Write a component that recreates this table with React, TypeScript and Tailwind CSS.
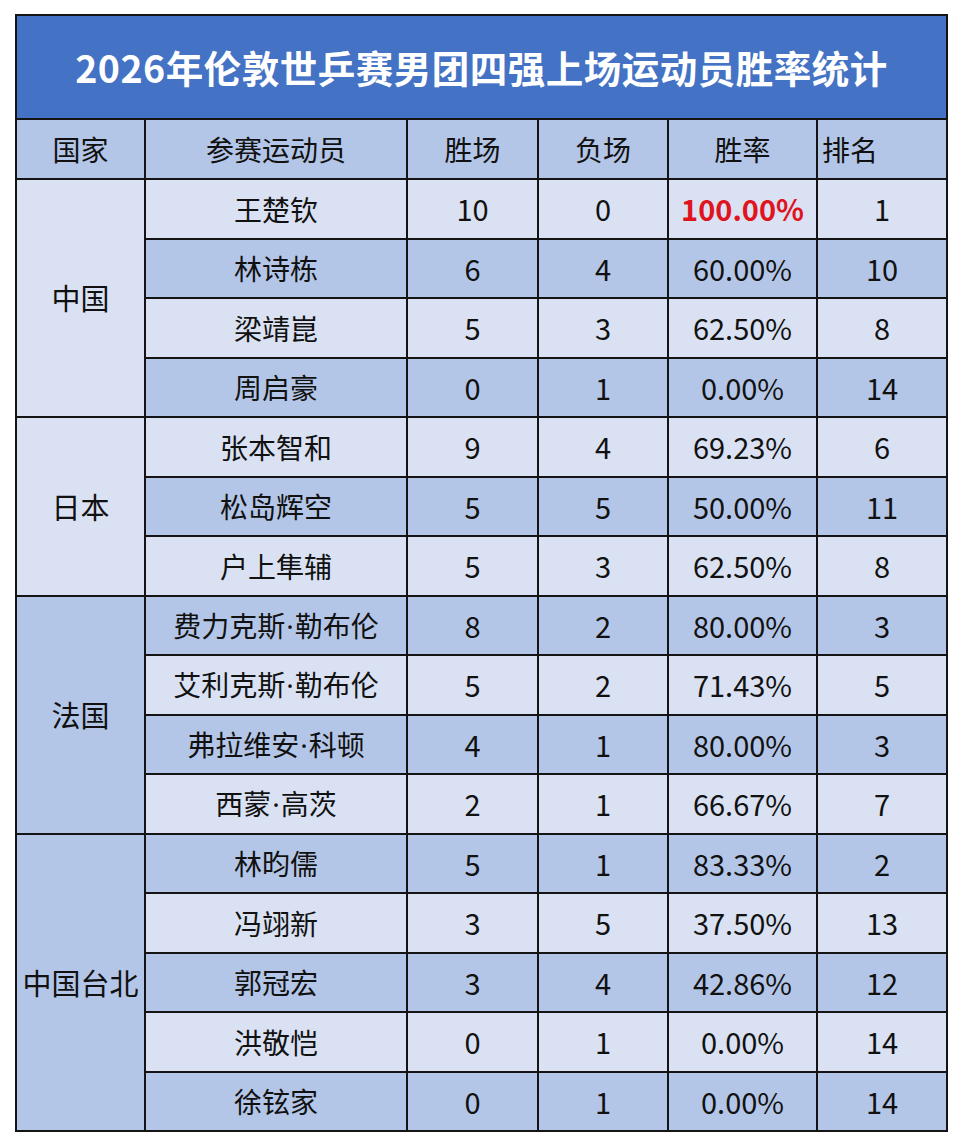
const groups = [
  {
    country: '中国',
    tone: 'light',
    players: [
      { name: '王楚钦', win: 10, loss: 0, rate: '100.00%', rank: 1, top: true },
      { name: '林诗栋', win: 6, loss: 4, rate: '60.00%', rank: 10 },
      { name: '梁靖崑', win: 5, loss: 3, rate: '62.50%', rank: 8 },
      { name: '周启豪', win: 0, loss: 1, rate: '0.00%', rank: 14 },
    ],
  },
  {
    country: '日本',
    tone: 'light',
    players: [
      { name: '张本智和', win: 9, loss: 4, rate: '69.23%', rank: 6 },
      { name: '松岛辉空', win: 5, loss: 5, rate: '50.00%', rank: 11 },
      { name: '户上隼辅', win: 5, loss: 3, rate: '62.50%', rank: 8 },
    ],
  },
  {
    country: '法国',
    tone: 'dark',
    players: [
      { name: '费力克斯·勒布伦', win: 8, loss: 2, rate: '80.00%', rank: 3 },
      { name: '艾利克斯·勒布伦', win: 5, loss: 2, rate: '71.43%', rank: 5 },
      { name: '弗拉维安·科顿', win: 4, loss: 1, rate: '80.00%', rank: 3 },
      { name: '西蒙·高茨', win: 2, loss: 1, rate: '66.67%', rank: 7 },
    ],
  },
  {
    country: '中国台北',
    tone: 'dark',
    players: [
      { name: '林昀儒', win: 5, loss: 1, rate: '83.33%', rank: 2 },
      { name: '冯翊新', win: 3, loss: 5, rate: '37.50%', rank: 13 },
      { name: '郭冠宏', win: 3, loss: 4, rate: '42.86%', rank: 12 },
      { name: '洪敬恺', win: 0, loss: 1, rate: '0.00%', rank: 14 },
      { name: '徐铉家', win: 0, loss: 1, rate: '0.00%', rank: 14 },
    ],
  },
];

const cell = 'border-2 border-[#141414] text-center align-middle p-0';
const num = 'text-[29px]';

// the names use a narrow latin middle dot, not the full-width CJK one
function Name({ name }: { name: string }) {
  const parts = name.split('·');
  return (
    <>
      {parts.map((part, i) => (
        <span key={i}>
          {i > 0 && <span className="font-['Noto_Sans',sans-serif] mx-[1px]">·</span>}
          {part}
        </span>
      ))}
    </>
  );
}

export default function App() {
  let rowIndex = 0;
  return (
    <div
      className="w-[960px] h-[1144px] bg-white pl-[15px] pt-[14px]"
      style={{ fontFamily: '"Microsoft YaHei", "Noto Sans CJK SC", "Noto Sans", sans-serif' }}
    >
      <table className="border-collapse border-2 border-[#141414] w-[931px] table-fixed text-[#111] text-[28px]">
        <colgroup>
          <col className="w-[129px]" />
          <col className="w-[262px]" />
          <col className="w-[131px]" />
          <col className="w-[130px]" />
          <col className="w-[149px]" />
          <col className="w-[130px]" />
        </colgroup>
        <thead>
          <tr className="h-[104px]">
            <th colSpan={6} className={`${cell} bg-[#4472c4] text-white text-[37.5px] font-bold tracking-[0.5px]`}>
              2026年伦敦世乒赛男团四强上场运动员胜率统计
            </th>
          </tr>
          <tr className="h-[60px] bg-[#b4c6e7]">
            <th className={`${cell} font-normal`}>国家</th>
            <th className={`${cell} font-normal`}>参赛运动员</th>
            <th className={`${cell} font-normal`}>胜场</th>
            <th className={`${cell} font-normal`}>负场</th>
            <th className={`${cell} font-normal`}>胜率</th>
            <th className={`${cell} font-normal text-left pl-[4px]`}>排名</th>
          </tr>
        </thead>
        <tbody>
          {groups.map((g) =>
            g.players.map((p, i) => {
              const bg = rowIndex++ % 2 === 0 ? 'bg-[#d9e1f2]' : 'bg-[#b4c6e7]';
              return (
                <tr key={p.name} className="h-[59.5px]">
                  {i === 0 && (
                    <td
                      rowSpan={g.players.length}
                      className={`${cell} text-[29px] ${g.tone === 'light' ? 'bg-[#d9e1f2]' : 'bg-[#b4c6e7]'}`}
                    >
                      {g.country}
                    </td>
                  )}
                  <td className={`${cell} ${bg}`}>
                    <Name name={p.name} />
                  </td>
                  <td className={`${cell} ${bg} ${num}`}>{p.win}</td>
                  <td className={`${cell} ${bg} ${num}`}>{p.loss}</td>
                  <td className={`${cell} ${bg} ${num} ${p.top ? 'text-[#e0141e] font-bold' : ''}`}>{p.rate}</td>
                  <td className={`${cell} ${bg} ${num}`}>{p.rank}</td>
                </tr>
              );
            })
          )}
        </tbody>
      </table>
    </div>
  );
}
